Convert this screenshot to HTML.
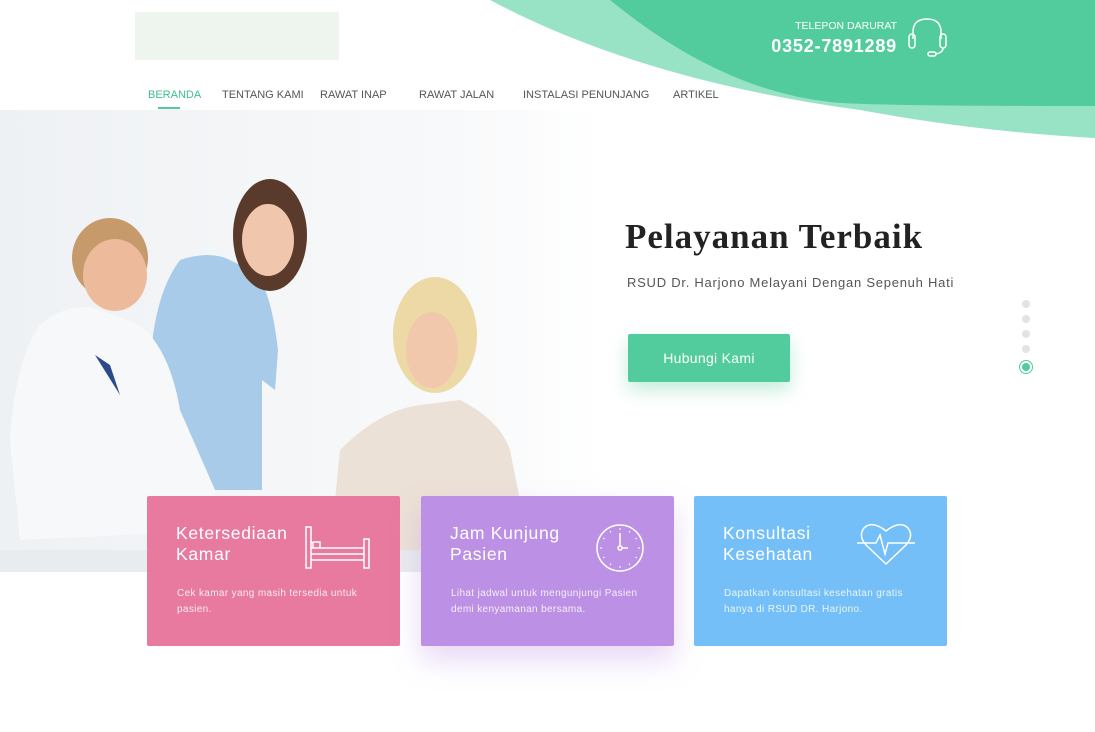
<!DOCTYPE html>
<html><head><meta charset="utf-8"><style>
*{margin:0;padding:0;box-sizing:border-box}
body{width:1095px;height:732px;overflow:hidden;background:#fff;font-family:"Liberation Sans",sans-serif;position:relative}
.abs{position:absolute}
.nav a{position:absolute;top:89px;font-size:11px;color:#555;letter-spacing:0;text-decoration:none}
.card{position:absolute;top:496px;height:150px;width:253px;border-radius:2px;color:#fff}
.card h3{position:absolute;left:29px;top:27px;font-size:17.5px;font-weight:normal;letter-spacing:.7px;line-height:21px}
.card p{position:absolute;left:30px;top:90px;font-size:10px;line-height:16px;letter-spacing:.35px;opacity:.85}
</style></head><body>
<svg class="abs" style="left:0;top:110px" width="640" height="462" viewBox="0 0 640 462">
<defs>
<linearGradient id="bg" x1="0" x2="1"><stop offset="0" stop-color="#eef1f4"/><stop offset=".7" stop-color="#f8f9fa"/><stop offset="1" stop-color="#fff"/></linearGradient>
<linearGradient id="fade" x1="0" x2="1"><stop offset=".8" stop-color="#fff" stop-opacity="0"/><stop offset="1" stop-color="#fff"/></linearGradient>
</defs>
<rect width="640" height="462" fill="url(#bg)"/>
<rect x="0" y="440" width="640" height="22" fill="#e9ecee"/>
<path d="M180 150 Q210 140 230 150 L250 160 Q270 170 278 240 L275 280 L262 270 L262 380 L165 380 L165 260 L150 275 Q150 190 180 150Z" fill="#a8cbe9"/>
<ellipse cx="270" cy="125" rx="37" ry="56" fill="#5a3a2a"/>
<ellipse cx="268" cy="130" rx="26" ry="36" fill="#f0c6ac"/>
<path d="M40 215 Q70 190 100 200 L140 215 Q170 240 180 300 L215 380 L230 420 L20 430 L10 330 Q15 250 40 215Z" fill="#f7f8fa"/>
<path d="M95 245 L110 255 L120 285 Z" fill="#2c4a8a"/>
<ellipse cx="110" cy="148" rx="38" ry="40" fill="#c79a6c"/>
<ellipse cx="115" cy="165" rx="32" ry="36" fill="#edbb9c"/>
<ellipse cx="435" cy="225" rx="42" ry="58" fill="#ecd9a5"/>
<ellipse cx="432" cy="240" rx="26" ry="38" fill="#f1c8ac"/>
<path d="M340 340 Q380 300 420 295 L460 290 Q500 310 510 340 L530 440 L330 440 Z" fill="#ece1d6"/>
<rect width="640" height="462" fill="url(#fade)"/>
</svg>
<svg class="abs" style="left:0;top:0" width="1095" height="140" viewBox="0 0 1095 140">
<path d="M490 0 Q640 80 860 110 Q980 132 1095 138 L1095 0Z" fill="#98e3c6"/>
<path d="M610 0 Q720 90 830 102 Q860 106 1095 106 L1095 0Z" fill="#52cc9c"/>
</svg>
<div class="abs" style="left:135px;top:12px;width:204px;height:48px;background:#eef5ef"></div>
<div class="abs" style="left:770px;top:20px;width:127px;text-align:right;color:#fff;font-size:10.5px;letter-spacing:0">TELEPON DARURAT</div>
<div class="abs" style="left:760px;top:36px;width:137px;text-align:right;color:#fff;font-size:18px;font-weight:bold;letter-spacing:.8px">0352-7891289</div>
<svg class="abs" style="left:906px;top:17px" width="44" height="42" viewBox="0 0 44 42" fill="none" stroke="#fff" stroke-width="1.5">
<path d="M7 22 V15 Q7 2 21 2 Q35 2 35 15 V22"/><rect x="3" y="17" width="6" height="14" rx="3"/><rect x="34" y="17" width="6" height="14" rx="3"/><path d="M37 31 Q37 36 29 37"/><rect x="22" y="35" width="8" height="4" rx="2"/></svg>
<div class="nav">
<a style="left:148px;color:#3fbf8c">BERANDA</a>
<div class="abs" style="left:158px;top:107px;width:22px;height:1.5px;background:#52cc9c"></div>
<a style="left:222px">TENTANG KAMI</a><a style="left:320px">RAWAT INAP</a><a style="left:419px">RAWAT JALAN</a><a style="left:523px">INSTALASI PENUNJANG</a><a style="left:673px">ARTIKEL</a>
</div>
<div class="abs" style="left:625px;top:217px;font-family:'Liberation Serif',serif;font-size:35px;font-weight:bold;color:#222;letter-spacing:1px">Pelayanan Terbaik</div>
<div class="abs" style="left:627px;top:275px;font-size:13px;color:#555;letter-spacing:.75px">RSUD Dr. Harjono Melayani Dengan Sepenuh Hati</div>
<div class="abs" style="left:628px;top:334px;width:162px;height:48px;background:#52cc9c;color:#fff;font-size:14px;letter-spacing:.3px;text-align:center;line-height:48px;border-radius:2px;box-shadow:0 8px 18px rgba(82,204,156,.35)">Hubungi Kami</div>
<div class="abs" style="left:1022px;top:300px;width:8px;height:8px;border-radius:50%;background:#e3e3e3"></div>
<div class="abs" style="left:1022px;top:315px;width:8px;height:8px;border-radius:50%;background:#e3e3e3"></div>
<div class="abs" style="left:1022px;top:330px;width:8px;height:8px;border-radius:50%;background:#e3e3e3"></div>
<div class="abs" style="left:1022px;top:345px;width:8px;height:8px;border-radius:50%;background:#e3e3e3"></div>
<div class="abs" style="left:1019px;top:360px;width:14px;height:14px;border-radius:50%;border:1.5px solid #52cc9c;background:#fff"></div>
<div class="abs" style="left:1022px;top:363px;width:8px;height:8px;border-radius:50%;background:#52cc9c"></div>
<div class="card" style="left:147px;background:#e77a9e"><h3>Ketersediaan<br>Kamar</h3>
<svg class="abs" style="left:157px;top:30px" width="68" height="44" viewBox="0 0 68 44" fill="none" stroke="#fff" stroke-width="1.5"><rect x="2" y="1" width="5" height="41"/><rect x="60" y="13" width="5" height="29"/><path d="M7 22 H60 M7 28 H60 M7 34 H60"/><path d="M7 16 Q9 16 9 18 V22 M9 16 H16 V22"/></svg>
<p>Cek kamar yang masih tersedia untuk<br>pasien.</p></div>
<div class="card" style="left:421px;background:#bc90e4;box-shadow:0 14px 28px rgba(188,144,228,.35)"><h3>Jam Kunjung<br>Pasien</h3>
<svg class="abs" style="left:174px;top:27px" width="50" height="50" viewBox="0 0 50 50" fill="none" stroke="#fff" stroke-width="1.5"><circle cx="25" cy="25" r="23"/><circle cx="25" cy="25" r="2"/><path d="M25 23 V10 M27 25 H33"/><path d="M25 5v2M25 43v2M5 25h2M43 25h2M15 8l1 1.5M35 8l-1 1.5M15 42l1-1.5M35 42l-1-1.5M8 15l1.5 1M42 15l-1.5 1M8 35l1.5-1M42 35l-1.5-1" stroke-width="1"/></svg>
<p>Lihat jadwal untuk mengunjungi Pasien<br>demi kenyamanan bersama.</p></div>
<div class="card" style="left:694px;background:#74bff7"><h3>Konsultasi<br>Kesehatan</h3>
<svg class="abs" style="left:162px;top:25px" width="60" height="46" viewBox="0 0 60 46" fill="none" stroke="#fff" stroke-width="1.5"><path d="M30 43 L10 24 Q2 15 8 7 Q16 -1 30 10 Q44 -1 52 7 Q58 15 50 24 Z"/><path d="M1 22 H20 L24 14 L29 33 L32 22 H59"/></svg>
<p>Dapatkan konsultasi kesehatan gratis<br>hanya di RSUD DR. Harjono.</p></div>
</body></html>
